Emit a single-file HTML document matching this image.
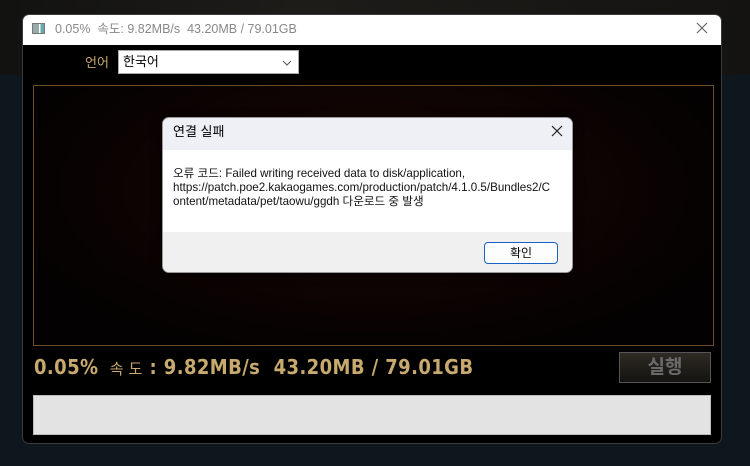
<!DOCTYPE html>
<html><head><meta charset="utf-8"><style>
*{margin:0;padding:0;box-sizing:border-box}
body{width:750px;height:466px;overflow:hidden;background:#0f171e;font-family:"Liberation Sans","Noto Sans CJK KR",sans-serif;position:relative}
.bgtop{position:absolute;left:0;top:0;width:750px;height:75px;background:linear-gradient(90deg,#121211,#1e1c19 40%,#141311)}
.win{position:absolute;left:22px;top:14px;width:700px;height:430px;background:#000;border-radius:7px;overflow:hidden;border:1px solid #3a3a3a}
.title{position:absolute;left:0;top:0;width:700px;height:30px;background:#fff;color:#888;font-size:12.5px;line-height:28px;padding-left:32px}
.ico{position:absolute;left:9px;top:8px;width:13px;height:11px;border:1px solid #777;background:linear-gradient(90deg,#9aa 0,#9aa 55%,#fff 55%,#fff 70%,#6aa 70%)}
.x{position:absolute;left:672px;top:6px;width:14px;height:14px}
.lbl{position:absolute;left:62px;top:37px;color:#c8a96e;font-size:13px}
.combo{position:absolute;left:95px;top:35px;width:181px;height:24px;background:#fff;border:1px solid #aaa;font-size:13px;line-height:22px;padding-left:4px;color:#000}
.frame{position:absolute;left:10px;top:70px;width:681px;height:261px;border:1px solid #6b4e28;background:radial-gradient(ellipse at 50% 40%,#1f0a08 0,#0f0403 40%,#030101 80%)}
.stats{position:absolute;left:11px;top:340px;color:#c8a96e;font-weight:bold;font-size:20px;letter-spacing:0.4px;font-family:"DejaVu Sans Condensed","DejaVu Sans","Noto Sans CJK KR",sans-serif;white-space:nowrap}
.stats small{font-size:15px;font-weight:normal}
.run{position:absolute;left:596px;top:337px;width:92px;height:31px;background:linear-gradient(#2e2a24,#141310);border:1px solid #555;color:#6a6a6a;font-size:19px;font-weight:bold;text-align:center;line-height:29px}
.bar{position:absolute;left:10px;top:380px;width:678px;height:40px;background:#e3e3e3;border:1px solid #bbb}
.dlg{position:absolute;left:162px;top:117px;width:411px;height:156px;background:#fff;border-radius:7px;overflow:hidden;box-shadow:0 2px 10px rgba(0,0,0,.5);border:1px solid #999}
.dt{height:32px;background:#eef0f6;font-size:13px;line-height:28px;padding-left:10px;color:#000}
.dx{position:absolute;left:388px;top:7px;width:12px;height:12px}
.body{height:82px;padding:17px 10px 0;font-size:11.6px;line-height:14px;color:#111}
.foot{height:42px;background:#f0f0f0;position:relative}
.ok{position:absolute;left:321px;top:10px;width:74px;height:22px;border:1px solid #1565c0;border-radius:4px;background:#fdfdfd;font-size:12px;text-align:center;line-height:20px}
</style></head><body>
<div class="bgtop"></div>
<div class="win">
 <div class="title"><div class="ico"></div>0.05%&nbsp; 속도: 9.82MB/s&nbsp; 43.20MB / 79.01GB
 <svg class="x" viewBox="0 0 14 14"><path d="M2 2L12 12M12 2L2 12" stroke="#666" stroke-width="1.2"/></svg></div>
 <div class="lbl">언어</div>
 <div class="combo">한국어<svg style="position:absolute;right:6px;top:9px" width="10" height="6" viewBox="0 0 10 6"><path d="M1 1L5 5L9 1" fill="none" stroke="#555" stroke-width="1"/></svg></div>
 <div class="frame"></div>
 <div class="stats">0.05% <small>&nbsp;속 도</small> : 9.82MB/s&nbsp; 43.20MB / 79.01GB</div>
 <div class="run">실행</div>
 <div class="bar"></div>
</div>
<div class="dlg">
 <div class="dt">연결 실패</div>
 <svg class="dx" viewBox="0 0 12 12"><path d="M1 1L11 11M11 1L1 11" stroke="#222" stroke-width="1.2"/></svg>
 <div class="body">오류 코드: Failed writing received data to disk/application,<br>https://patch.poe2.kakaogames.com/production/patch/4.1.0.5/Bundles2/C<br>ontent/metadata/pet/taowu/ggdh 다운로드 중 발생</div>
 <div class="foot"><div class="ok">확인</div></div>
</div>
</body></html>
